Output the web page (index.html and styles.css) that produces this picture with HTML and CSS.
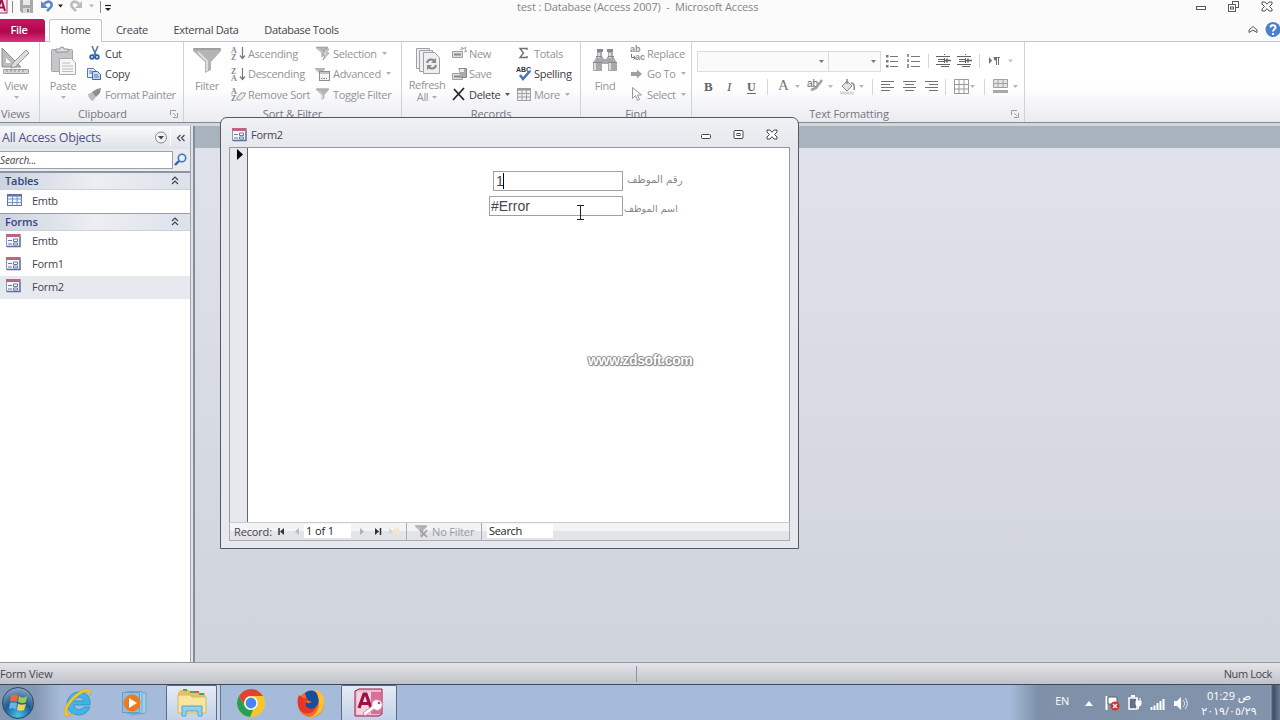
FILE: index.html
```html
<!DOCTYPE html>
<html lang="en">
<head>
  <meta charset="UTF-8">
  <title>test : Database (Access 2007) - Microsoft Access</title>
  <link rel="stylesheet" href="styles.css">
</head>
<body>
  <!-- Shared icons -->
  <svg class="sprite" width="0" height="0">
    <symbol id="i-form" viewBox="0 0 16 14">
      <rect x=".5" y=".5" width="13.500" height="12" fill="#f4f6fc" stroke="#8b97ba"/>
      <rect x="0" y="0" width="14.500" height="3" fill="#bd6480"/>
      <path d="M2 6.500h4M2 10h4" stroke="#6877a6"/>
      <path d="M7.500 5h4v2.500h-4zM7.500 9h4v2h-4z" fill="#fff" stroke="#6877a6"/>
      <path d="M14 3v9.500H1" fill="none" stroke="#5c6d9e" stroke-width="1.300"/>
    </symbol>
    <symbol id="i-funnel" viewBox="0 0 28 26">
      <path d="M0 1h28v3L18 15v8l-6 3V15L0 4z" fill="#b4b4b6"/>
      <path d="M1 2h26" stroke="#8b8b8d"/>
      <path d="M5 5l9 9v10" fill="none" stroke="#dcdcde" stroke-width="2"/>
    </symbol>
    <symbol id="i-down" viewBox="0 0 5 3"><path d="M0 0h5L2.500 3z" fill="currentColor"/></symbol>
    <symbol id="i-launch" viewBox="0 0 8 8"><path d="M.5 5V.5H6M3 3l3 3M7.500 3v4.500H3" fill="none" stroke="#9a9ca2"/></symbol>
    <symbol id="i-collapse" viewBox="0 0 8 9"><path d="M1 4l3-3 3 3M1 8l3-3 3 3" fill="none" stroke="#3b4458" stroke-width="1.200"/></symbol>
  </svg>

  <header class="titlebar">
    <div class="quick">
      <svg width="112" height="14" viewBox="0 0 112 14">
        <rect x="-6" y="-4" width="13" height="17" fill="#f9e6ee" stroke="#b51e5a"/>
        <path d="M-3 11L1 1h1l3 10M-1 7.500h5" fill="none" stroke="#a01048" stroke-width="2"/>
        <path d="M12.500 1v12M100.500 1v12" stroke="#8d8d90"/>
        <path d="M20 0h13v13H22l-2-2z" fill="#a9a9ac"/><path d="M23 0h7v5h-7z" fill="#e8e8ea"/><path d="M23 8h7v5h-7z" fill="#d6d6d8"/><path d="M27 9h2v3h-2z" fill="#888"/>
        <path d="M44 4c5-5 9-1 7 3l-4 4" fill="none" stroke="#5b86c8" stroke-width="2.600"/><path d="M41 1v7h7z" fill="#5b86c8"/>
        <path d="M58 4.500h5l-2.500 3z" fill="#222"/>
        <path d="M79 4c-5-5-9-1-7 3l4 4" fill="none" stroke="#bbb" stroke-width="2.600"/><path d="M82 1v7h-7z" fill="#bbb"/>
        <path d="M89 4.500h5l-2.500 3z" fill="#b5b5b8"/>
        <path d="M105 5.500h6" stroke="#222" stroke-width="1.200"/><path d="M105 8h6l-3 3z" fill="#222"/>
      </svg>
    </div>
    <div class="app-title">test : Database (Access 2007)&nbsp; -&nbsp; Microsoft Access</div>
    <svg class="window-buttons" width="86" height="14" viewBox="0 0 86 14">
      <g fill="#fff" stroke="#55565c">
        <rect x="2.500" y="6.500" width="9" height="3"/>
        <rect x="38.500" y="1.500" width="6" height="6"/><rect x="34.500" y="4.500" width="7" height="7"/><rect x="36.500" y="7" width="3" height="2"/>
        <path d="M68 2h3l2 2.300L75 2h3v2L75.500 6.500 78 9v2h-3l-2-2.300L71 11h-3V9l2.500-2.500L68 4z"/>
      </g>
    </svg>
  </header>

  <nav class="tabs">
    <a class="tab file">File</a>
    <a class="tab home">Home</a>
    <a class="tab create">Create</a>
    <a class="tab external">External Data</a>
    <a class="tab tools">Database Tools</a>
    <svg class="help" width="34" height="20" viewBox="0 0 34 20">
      <path d="M3 13.500V11l4-3.500 4 3.500v2.500L7 11z" fill="#fff" stroke="#55565c"/>
      <circle cx="27" cy="10.500" r="7.500" fill="#4a80cf"/>
      <path d="M24.500 8.500c0-3 5-3 5 0 0 1.800-2.500 1.800-2.500 4M27 14v2" fill="none" stroke="#fff" stroke-width="2"/>
    </svg>
  </nav>

  <section class="ribbon">
    <div class="group views">
      <div class="tools">
        <div class="big">
          <svg width="30" height="28" viewBox="0 0 30 28"><path d="M2 1v19h19z" fill="#bcbcbe" stroke="#8e8e91"/><path d="M6 11v5h5z" fill="#fff"/><path d="M12 17L26 3l3 3-14 14-4 1z" fill="#dcdcde" stroke="#98989b"/><path d="M3.500 22.500h25v4h-25z" fill="#d5d5d7" stroke="#a3a3a6"/><path d="M7 22v3m4-3v3m4-3v3m4-3v3m4-3v3" stroke="#8e8e91"/></svg>
          <span>View</span><svg class="arrow"><use href="#i-down"/></svg>
        </div>
      </div>
      <div class="caption">Views</div>
    </div>

    <div class="group clipboard">
      <div class="tools">
        <div class="big">
          <svg width="28" height="30" viewBox="0 0 28 30"><rect x="2.500" y="3.500" width="21" height="22" rx="1" fill="#c6c6c9" stroke="#a5a5a8"/><path d="M7 6V3h4a2 2 0 014 0h4v3z" fill="#dededf" stroke="#919194"/><path d="M10.500 12.500h12l4 4v12h-16z" fill="#f6f6f7" stroke="#aaaaad"/><path d="M13 17h8M13 20h11M13 23h11M13 25.500h11" stroke="#bcbcbf"/></svg>
          <span>Paste</span><svg class="arrow"><use href="#i-down"/></svg>
        </div>
        <div class="col">
          <div class="cmd on"><svg viewBox="0 0 16 16"><path d="M5 1l4 9M11 1L7 10" stroke="#5577a8" stroke-width="1.600"/><circle cx="5" cy="12" r="1.800" fill="none" stroke="#2c5ba8" stroke-width="1.800"/><circle cx="10" cy="12" r="1.800" fill="none" stroke="#2c5ba8" stroke-width="1.800"/></svg>Cut</div>
          <div class="cmd on"><svg viewBox="0 0 16 16"><path d="M.5 2.500h6l2 2v7h-8z" fill="#e9f0fb" stroke="#5478b5"/><path d="M5.500 5.500h5l3 3v5h-8z" fill="#c9daf4" stroke="#3e63a5"/><path d="M7 9h4M7 11h5M2 5h3M2 7h3" stroke="#5478b5"/></svg>Copy</div>
          <div class="cmd tight"><svg viewBox="0 0 16 16"><path d="M1 8l5-2 3 5-3 4c-3-1-5-4-5-7z" fill="#bcbcbf"/><path d="M5 6l5-3 4-1-1 5-4 4z" fill="#8d8d90"/></svg>Format Painter</div>
        </div>
      </div>
      <div class="caption">Clipboard<svg class="launch"><use href="#i-launch"/></svg></div>
    </div>

    <div class="group sort">
      <div class="tools">
        <div class="big">
          <svg width="30" height="28"><use href="#i-funnel" x="1" y="1" width="28" height="26"/></svg>
          <span>Filter</span>
        </div>
        <div class="col first">
          <div class="cmd"><svg viewBox="0 0 16 16"><text x="1" y="8">A</text><text x="1" y="15">Z</text><path d="M12.500 2v11M10 10.500l2.500 3 2.500-3" fill="none" stroke="#77777a" stroke-width="1.200"/></svg>Ascending</div>
          <div class="cmd"><svg viewBox="0 0 16 16"><text x="1" y="8">Z</text><text x="1" y="15">A</text><path d="M12.500 2v11M10 10.500l2.500 3 2.500-3" fill="none" stroke="#77777a" stroke-width="1.200"/></svg>Descending</div>
          <div class="cmd"><svg viewBox="0 0 16 16"><text x="1" y="8">A</text><text x="1" y="15">Z</text><path d="M7 12l4-5h4.500l-1 3-4 4H7z" fill="#ececee" stroke="#99999c"/></svg>Remove Sort</div>
        </div>
        <div class="col">
          <div class="cmd"><svg viewBox="0 0 16 16"><use href="#i-funnel" x="1" y="1" width="12" height="12"/><path d="M11 4l-4 6h3l-2 5 6-7h-3l3-4z" fill="#d5d5d8" stroke="#8e8e91" stroke-width=".7"/></svg>Selection<svg class="arrow"><use href="#i-down"/></svg></div>
          <div class="cmd"><svg viewBox="0 0 16 16"><use href="#i-funnel" x="0" y="1" width="10" height="11"/><rect x="4.500" y="5.500" width="10" height="9" fill="#f4f4f5" stroke="#8e8e91"/><path d="M5 7h9" stroke="#8e8e91"/><path d="M6 12.500h6" stroke="#777" stroke-dasharray="1.500 1"/></svg>Advanced<svg class="arrow"><use href="#i-down"/></svg></div>
          <div class="cmd"><svg viewBox="0 0 16 16"><use href="#i-funnel" x="1" y="2" width="13" height="12"/></svg>Toggle Filter</div>
        </div>
      </div>
      <div class="caption">Sort &amp; Filter</div>
    </div>

    <div class="group records">
      <div class="tools">
        <div class="big">
          <svg width="28" height="30" viewBox="0 0 28 30"><g fill="#efeff0" stroke="#a0a0a3"><path d="M3.500 2.500h13v20h-13z"/><path d="M6.500 4.500h13v21h-13z"/><path d="M10.500 6.500h11l5 5v16h-16z"/></g><path d="M14 17c1-5 7-4 8-1m1 3c-1 5-7 4-8 1" fill="none" stroke="#88888b" stroke-width="2"/><path d="M23 12v5h-5zM14 24v-5h5z" fill="#88888b"/></svg>
          <span>Refresh</span><span class="second">All<svg class="arrow"><use href="#i-down"/></svg></span>
        </div>
        <div class="col first">
          <div class="cmd"><svg viewBox="0 0 16 16"><path d="M1.500 6.500h10v6h-10z" fill="#e0e0e2" stroke="#a0a0a3"/><path d="M3 9.500h7" stroke="#88888b" stroke-width="2"/><path d="M9 4l2 1V2l1 2 3-2-1 3 2 1-3 1" fill="none" stroke="#a8a8ab"/></svg>New</div>
          <div class="cmd"><svg viewBox="0 0 16 16"><path d="M1.500 7.500h10v6h-10z" fill="#e0e0e2" stroke="#a0a0a3"/><path d="M3 10.500h7" stroke="#88888b" stroke-width="2"/><path d="M7.500 2.500h8v9h-6" fill="#aaa" stroke="#8a8a8d"/><path d="M9 3h4v3H9z" fill="#eee"/></svg>Save</div>
          <div class="cmd on"><svg viewBox="0 0 16 16"><path d="M3 3l10 11M13 2L2 14" stroke="#252527" stroke-width="1.800"/></svg>Delete<svg class="arrow"><use href="#i-down"/></svg></div>
        </div>
        <div class="col">
          <div class="cmd"><svg viewBox="0 0 16 16"><path d="M11 5V3.500H4L7.500 8 4 12.500h7V11" fill="none" stroke="#707073" stroke-width="1.400"/></svg>Totals</div>
          <div class="cmd on"><svg viewBox="0 0 16 16"><text class="abc" x="0" y="6">ABC</text><path d="M4 9l3 4 7-8" fill="none" stroke="#4a70c4" stroke-width="2.500"/></svg>Spelling</div>
          <div class="cmd"><svg viewBox="0 0 16 16"><path d="M1.500 2.500h13v12h-13z" fill="#f0f0f1" stroke="#a0a0a3"/><path d="M1 3.500h14" stroke="#98989b" stroke-width="2"/><path d="M1 7.500h14M1 11h14M6 4v10M10.500 4v10" stroke="#a0a0a3"/></svg>More<svg class="arrow"><use href="#i-down"/></svg></div>
        </div>
      </div>
      <div class="caption">Records</div>
    </div>

    <div class="group find">
      <div class="tools">
        <div class="big">
          <svg width="28" height="28" viewBox="0 0 28 28"><path d="M6 4h5v5l2 3h2l2-3V4h5v5l4 7v8h-9v-7h-6v7H2v-8l4-7z" fill="#a9a9ac"/><path d="M6 2h6v3H6zM16 2h6v3h-6z" fill="#88888b"/><path d="M4 16v7M19 16v7M8 6v5M19 6v5" stroke="#dcdcde" stroke-width="2"/><path d="M2 15.500h9M17 15.500h9M5 9.500h6M17 9.500h6" stroke="#88888b"/></svg>
          <span>Find</span>
        </div>
        <div class="col">
          <div class="cmd"><svg viewBox="0 0 16 16"><text class="ab" x="1" y="7">ab</text><text class="ab" x="6" y="15">ac</text><path d="M2.500 9v3.500H6M4.500 11l2 1.500-2 2" fill="none" stroke="#777"/></svg>Replace</div>
          <div class="cmd"><svg viewBox="0 0 16 16"><path d="M2 6h6V3.500l5 4.500-5 4.500V10H2z" fill="#a0a0a3"/></svg>Go To<svg class="arrow"><use href="#i-down"/></svg></div>
          <div class="cmd"><svg viewBox="0 0 16 16"><path d="M3.500 1.500v11l3-3 2 5 2-1-2-4.500h4z" fill="#fff" stroke="#98989b"/></svg>Select<svg class="arrow"><use href="#i-down"/></svg></div>
        </div>
      </div>
      <div class="caption">Find</div>
    </div>

    <div class="group text">
      <div class="tools stack">
        <div class="format-row">
          <div class="combo"><svg class="arrow"><use href="#i-down"/></svg></div>
          <div class="combo small"><svg class="arrow"><use href="#i-down"/></svg></div>
          <svg class="lists" width="134" height="18" viewBox="0 0 134 18">
            <path d="M9 5.500h8M9 10.500h8M9 15.500h8M30 5.500h9M30 10.500h9M30 15.500h9" stroke="#77777a"/>
            <path d="M5 4h2.500v2.500H5zM5 9h2.500v2.500H5zM5 14h2.500v2.500H5z" fill="#77777a"/>
            <path d="M27 3v3M27 8v3M27 13v4" stroke="#77777a" stroke-width="1.500"/>
            <path d="M47.500 3v14M98.500 3v14" stroke="#d5d6d9"/>
            <g id="indent" stroke="#626265"><path d="M55 5.500h14M57 8.500h7M57 10.500h7M55 13.500h14M60 15.500h8"/><path d="M63.500 3v14" stroke-dasharray="1 1"/><path d="M64 9.500h6M66 7.500v4" stroke-width="1.500"/></g>
            <use href="#indent" x="21"/>
            <path d="M108 6v7l3-3.500z" fill="#707073"/><path d="M114 6.500h5M115.500 6v8M117.500 6v8" stroke="#707073"/><path d="M113 6h3v4c-3 0-4-3-3-4z" fill="#707073"/>
            <path d="M127 8.500h5l-2.500 3z" fill="#c0c0c3"/>
          </svg>
        </div>
        <svg class="format-row" width="328" height="24" viewBox="0 0 328 24">
          <g class="glyph"><text class="b" x="7" y="18">B</text><text class="i" x="30" y="18">I</text><text class="u" x="50" y="18">U</text><text class="a" x="81" y="17">A</text><text class="ab" x="110" y="14">ab</text></g>
          <path d="M50 20.500h9" stroke="#666"/>
          <path d="M114 17l5-2 6-8" fill="none" stroke="#a0a0a3" stroke-width="2.500"/>
          <path d="M145 13l5-5 5 5-5 5z" fill="#e2e2e4" stroke="#88888b"/><path d="M150 6v5M154 10c3 0 4 3 3 7" fill="none" stroke="#88888b" stroke-width="1.500"/><path d="M143 20h14" stroke="#dadadd" stroke-width="3"/>
          <g fill="#b7b7ba"><path d="M98 12h5l-2.500 3zM131 12h5l-2.500 3zM162 12h5l-2.500 3zM273 12h5l-2.500 3zM316 12h5l-2.500 3z"/></g>
          <path d="M70.500 6v16M175.500 6v16M248.500 6v16M287.500 6v16" stroke="#d5d6d9"/>
          <path d="M184 8.500h13M184 11.500h9M184 14.500h13M184 17.500h9M206 8.500h13M208 11.500h9M206 14.500h13M208 17.500h9M228 8.500h13M232 11.500h9M228 14.500h13M232 17.500h9" stroke="#727275" stroke-width="1.200"/>
          <path d="M257.500 6.500h14v14h-14zM262 6v14M267 6v14M257 11.500h15M257 16h15" fill="none" stroke="#98989b"/>
          <path d="M296.500 6.500h14v8h-14zM301 6v8M306 6v8M296 10.500h15" fill="#e5e5e7" stroke="#a0a0a3"/><path d="M296 18.500h15" stroke="#a8a8ab" stroke-width="3"/>
        </svg>
      </div>
      <div class="caption">Text Formatting<svg class="launch"><use href="#i-launch"/></svg></div>
    </div>
  </section>

  <main class="main">
    <aside class="objects">
      <div class="objects-head">
        <span>All Access Objects</span>
        <svg width="34" height="16" viewBox="0 0 34 16"><circle cx="8" cy="7.500" r="5.500" fill="#f2f3f5" stroke="#85888f"/><path d="M5 6h6l-3 3.500z" fill="#444"/><path d="M17.500 0v16" stroke="#fff"/><path d="M27.500 5l-3 3 3 3M31.500 5l-3 3 3 3" fill="none" stroke="#3b4458" stroke-width="1.200"/></svg>
      </div>
      <div class="search">
        <div class="search-box">Search...</div>
        <svg width="16" height="16" viewBox="0 0 16 16"><circle cx="9" cy="6" r="3.700" fill="#e6f1fb" stroke="#3d78bf" stroke-width="1.600"/><path d="M6 9l-4 4" stroke="#345f9d" stroke-width="2.400"/></svg>
      </div>
      <div class="section">Tables<svg width="8" height="9"><use href="#i-collapse"/></svg></div>
      <div class="item table"><svg viewBox="0 0 16 14"><rect x="1.500" y="1.500" width="14" height="11" fill="#eef3fc" stroke="#5f7bab"/><path d="M1 2.500h15" stroke="#5471a8" stroke-width="2"/><path d="M2 6h14M2 9.500h14M6.500 2v10M11 2v10" stroke="#7b94be"/></svg>Emtb</div>
      <div class="section forms">Forms<svg width="8" height="9"><use href="#i-collapse"/></svg></div>
      <div class="item"><svg><use href="#i-form"/></svg>Emtb</div>
      <div class="item"><svg><use href="#i-form"/></svg>Form1</div>
      <div class="item selected"><svg><use href="#i-form"/></svg>Form2</div>
    </aside>
    <div class="workspace"></div>
  </main>

  <footer class="status">
    <span class="mode">Form View</span>
    <span>Num Lock</span>
  </footer>

  <div class="taskbar">
    <div class="start">
      <svg width="34" height="34" viewBox="0 0 34 34">
        <defs><radialGradient id="orb" cx=".5" cy=".9" r=".9"><stop offset="0" stop-color="#45c5ec"/><stop offset=".5" stop-color="#1d5c94"/><stop offset="1" stop-color="#8fa9c4"/></radialGradient></defs>
        <circle cx="17" cy="17" r="15.500" fill="url(#orb)" stroke="#2d4868"/>
        <path d="M10 10c3-2 5-1 7 0l-1 6c-3-1-5-1-7 0z" fill="#ee6a32"/><path d="M18 10c3 2 5 2 8 0l-1 6c-3 2-5 1-8 0z" fill="#9cca4c"/><path d="M9 17c2-1 4-1 7 0l-1 6c-3-1-4-1-7 0z" fill="#64b4ea"/><path d="M17 18c3 1 5 1 8 0l-2 6c-2 1-4 1-7 0z" fill="#fbd14a"/>
      </svg>
    </div>
    <div class="task ie">
      <svg width="32" height="32" viewBox="0 0 32 32"><path fill-rule="evenodd" d="M17 5c7 0 12 5 11 13H12c0 5 7 6 10 2h6c-2 5-6 8-11 8C10 28 5 23 5 17S10 5 17 5zm-5 9h10c-1-5-9-5-10 0z" fill="#3eb5e9" stroke="#2588bd" stroke-width=".7"/><path d="M4 29C-4 23 15 1 26 2c4 1 3 5 2 7 0-4-2-5-5-4C15 7 1 23 6 27c2 1 4 0 6-1-2 2-6 4-8 3z" fill="#f4c92f" stroke="#c69a24" stroke-width=".5"/></svg>
    </div>
    <div class="task wmp">
      <svg width="28" height="28" viewBox="0 0 28 28"><path d="M10 2l15 2v20l-15 2z" fill="#a5cfe7" stroke="#6ba7cc"/><path d="M6 2.500h15v22H6z" fill="#a5cfe7" stroke="#6ba7cc"/><path d="M1.500 3.500h17v20h-17z" fill="#8fc0e2" stroke="#639cc5"/><circle cx="11" cy="14" r="8.500" fill="#ee7a1d"/><path d="M8 9l8 5-8 5z" fill="#fff"/></svg>
    </div>
    <div class="task explorer active">
      <svg width="34" height="30" viewBox="0 0 34 30"><path d="M3 5l2-3h9l2 3h14v18H3z" fill="#e5c166"/><path d="M8 2h4M15 4h6M24 6h5" stroke="#4fa25b" stroke-width="2"/><path d="M20 4h4" stroke="#d55b42" stroke-width="2"/><path d="M3 7h12l2 2h14v16H3z" fill="#f8e6a0" stroke="#d8b85f"/><path d="M7 28V18h20v10h-4v-5H11v5z" fill="#8fd0ed" stroke="#50a6cf"/></svg>
    </div>
    <div class="stack-edge"></div>
    <div class="task chrome">
      <svg width="30" height="30" viewBox="0 0 30 30"><circle cx="15" cy="15" r="14" fill="#f7c628"/><path d="M2.900 8A14 14 0 0127.100 8H15a7 7 0 00-6.100 10.500z" fill="#db4437"/><path d="M2.900 8l6 10.500A7 7 0 0017 21.700L14 29A14 14 0 012.900 8z" fill="#22a05a"/><circle cx="15" cy="15" r="6.800" fill="#fff"/><circle cx="15" cy="15" r="5.400" fill="#4386f4"/></svg>
    </div>
    <div class="task firefox">
      <svg width="30" height="30" viewBox="0 0 30 30"><circle cx="15" cy="16" r="13" fill="#f36c24"/><path d="M19 1c6 2 10 8 9 15-1 8-7 13-14 13 9-3 12-14 5-28z" fill="#ffc22f"/><path d="M9 5c6-5 12-2 13 4 2 5-1 12-7 12-4 0-7-3-5-7 2 2 4 1 6 0l-5-2z" fill="#174e9d"/><path d="M3 7l4 3 5 1-3 4c0 6 8 7 11 4-2 8-14 9-17 1C1 16 1 11 3 7z" fill="#e7352a"/></svg>
    </div>
    <div class="task access active">
      <svg width="30" height="30" viewBox="0 0 30 30"><path d="M1 3l4-2h23v25l-3 2H1z" fill="#f0b9ce" stroke="#a8134c"/><path d="M3 4h24v22H3z" fill="#d8719a"/><path d="M3 4h14v22H3z" fill="#f5d4e0"/><path d="M5 20l5-14h2l5 14M7 15.500h8" fill="none" stroke="#a00f46" stroke-width="3.200"/><path d="M11 28l-2-3 9-7c-1-5 3-7 6-6 5 0 6 8 1 10-2 1-4 0-5-1z" fill="#fff" stroke="#d589a8"/><circle cx="25" cy="15" r="1.300" fill="#c83c74"/></svg>
    </div>
    <div class="tray">
      <span class="lang">EN</span>
      <svg width="104" height="20" viewBox="0 0 104 20">
        <path d="M1 13h8L5 8z" fill="#fff"/>
        <path d="M22.500 3v14" stroke="#fff" stroke-width="2"/><path d="M24 4h9v7h-9z" fill="#fff" stroke="#526275"/><circle cx="31" cy="13" r="4.500" fill="#d3302b"/><path d="M29 11l4 4m0-4l-4 4" stroke="#fff" stroke-width="1.300"/>
        <path d="M45 5h8v11h-8z" fill="#607289" stroke="#fff" stroke-width="1.500"/><path d="M47 3h4" stroke="#fff" stroke-width="2"/><path d="M52 8h5v3c0 3-5 3-5 0zM53 5v3M56 5v3M54.500 12v4" fill="#fff" stroke="#fff"/>
        <path d="M67.500 14v3M70.500 12.500v4.500M73.500 10v7M76.500 8v9M79.500 6v11" stroke="#fff" stroke-width="2"/>
        <path d="M90 8h3l4-4v13l-4-4h-3z" fill="#fff"/><path d="M99 7c2 2 2 5 0 7M101 5c3 3 3 8 0 11" fill="none" stroke="#e8edf4"/>
      </svg>
      <div class="clock" dir="ltr"><div>01:29 ص</div><div>٢٠١٩/٠٥/٢٩</div></div>
      <div class="show-desktop"></div>
    </div>
  </div>

  <!-- Floating form window -->
  <div class="form-window">
    <div class="form-title">
      <svg width="16" height="14"><use href="#i-form"/></svg>
      <span>Form2</span>
      <svg class="form-buttons" width="82" height="14" viewBox="0 0 82 14"><g fill="#fff" stroke="#44464d"><rect x="2.500" y="6.500" width="9" height="4" rx="1"/><rect x="35" y="2.500" width="9" height="8" rx="1"/><rect x="38" y="5.500" width="3" height="2"/><path d="M68 2h3l2 2.300L75 2h3v2L75.500 6.500 78 9v2h-3l-2-2.300L71 11h-3V9l2.500-2.500L68 4z"/></g></svg>
    </div>
    <div class="form-body">
      <div class="selector"><svg width="6" height="11"><path d="M0 0v11l6-5.500z"/></svg></div>
      <div class="sheet">
        <div class="field number"><div class="box">1<span class="caret"></span></div><label lang="ar" dir="rtl">رقم الموظف</label></div>
        <div class="field name"><div class="box">#Error</div><label lang="ar" dir="rtl">اسم الموظف</label></div>
      </div>
    </div>
    <div class="recordbar">
      <span class="record-label">Record:</span>
      <svg width="22" height="11" viewBox="0 0 22 11"><path d="M1 2v7" stroke="#333" stroke-width="1.500"/><path d="M6 2v7L2 5.500z" fill="#333"/><path d="M21 2v7l-4-3.500z" fill="#b9bbc0"/></svg>
      <span class="record-pos">1 of 1</span>
      <svg class="next" width="43" height="11" viewBox="0 0 43 11"><path d="M1 2v7l4-3.500z" fill="#b0b2b8"/><path d="M16 2v7l4-3.500z" fill="#333"/><path d="M21.500 2v7" stroke="#333" stroke-width="1.500"/><path d="M30 2v7l4-3.500z" fill="#d5d6da"/><path d="M36 2v7M39 2v7M34 5h7" stroke="#f1e6c6" stroke-width="2"/></svg>
      <span class="no-filter"><svg width="14" height="14" viewBox="0 0 14 14"><use href="#i-funnel" x="0" y="1" width="12" height="11"/><path d="M5 6l7 7M12 6l-6 7" stroke="#999" stroke-width="1.500"/></svg>No Filter</span>
      <span class="record-search">Search</span>
    </div>
    <div class="watermark">www.zdsoft.com</div>
    <svg class="ibeam" width="9" height="15" viewBox="0 0 9 15"><path d="M1 .5h7M4.500 1v13M1 14.500h7" stroke="#222"/></svg>
  </div>
</body>
</html>
```
FILE: styles.css
```css
/* Base */
* {
  box-sizing: border-box;
}

body {
  margin: 0;
  width: 1280px;
  height: 720px;
  overflow: hidden;
  position: relative;
  display: flex;
  flex-direction: column;
  font-family: "Open Sans", "Noto Sans", sans-serif;
  font-size: 11px;
  letter-spacing: -0.3px;
  color: #48434f;
  background: #fbfbfb;
  white-space: nowrap;
}

svg {
  flex: none;
  display: block;
}

.sprite {
  position: absolute;
}

.arrow {
  width: 5px;
  height: 3px;
  color: #b0b0b3;
}

/* Title bar */
.titlebar {
  height: 19px;
  display: flex;
  align-items: flex-start;
}

.app-title {
  margin-left: 405px;
  line-height: 14px;
  letter-spacing: -0.14px;
  color: #858488;
}

.window-buttons {
  margin-left: auto;
}

/* Tabs */
.tabs {
  height: 23px;
  flex: none;
  display: flex;
  border-bottom: 1px solid #c3c5c9;
}

.tab {
  line-height: 22px;
  height: 23px;
  text-align: center;
}

.file {
  width: 45px;
  padding-right: 7px;
  color: #fff;
  font-weight: 600;
  background: linear-gradient(#c5175f, #b2064f 55%, #d5377c);
  border-radius: 0 3px 0 0;
}

.home {
  width: 53px;
  margin-left: 4px;
  background: #fff;
  border: 1px solid #c3c5c9;
  border-bottom: 0;
  border-radius: 3px 3px 0 0;
  line-height: 20px;
}

.create { width: 60px; }
.external { width: 88px; }
.tab.tools { width: 103px; }

.help {
  margin-left: auto;
}

/* Ribbon */
.ribbon {
  height: 81px;
  flex: none;
  display: flex;
  background: linear-gradient(#fff 55%, #e9ebef);
  border-bottom: 1px solid #84888f;
  color: #949397;
}

.group {
  display: flex;
  flex-direction: column;
  border-right: 1px solid #d0d2d6;
}

.views { width: 40px; }
.clipboard { width: 144px; }
.sort { width: 218px; }
.records { width: 179px; }
.find { width: 111px; }
.text { width: 333px; }

.group .tools {
  height: 64px;
  padding-top: 1px;
  display: flex;
}

.big {
  width: 46px;
  display: flex;
  flex-direction: column;
  align-items: center;
  padding-top: 3px;
}

.big > svg:first-child {
  height: 30px;
}

.big > span {
  line-height: 14px;
  margin-top: 3px;
}

.big > .arrow {
  margin-top: 3px;
}

.big > .second {
  display: flex;
  align-items: center;
  gap: 4px;
  line-height: 12px;
  margin-top: 0;
}

.records .big > span {
  line-height: 12px;
  letter-spacing: -0.4px;
}

.views .big { width: 32px; }
.views .big svg:first-child { align-self: flex-start; }
.clipboard .col { margin-left: 1px; }
.sort .first { width: 85px; }
.records .big { width: 48px; margin-left: 1px; }
.records .first { width: 65px; }
.find .big { width: 48px; }

.cmd {
  height: 20.6px;
  display: flex;
  align-items: center;
}

.cmd.tight {
  letter-spacing: -0.43px;
}

.cmd > svg:first-child {
  width: 16px;
  height: 16px;
  margin-right: 2px;
}

.cmd .arrow {
  margin-left: 5px;
}

.cmd.on {
  color: #3f3c46;
}

.cmd.on .arrow {
  color: #55555a;
}

.cmd text {
  font: bold 8px "Liberation Serif", serif;
  fill: #88888b;
  letter-spacing: 0;
}

.cmd .abc {
  font: bold 7px "Liberation Sans", sans-serif;
  fill: #333;
}

.cmd .ab {
  font: bold 9px "Liberation Sans", sans-serif;
  fill: #909093;
}

.caption {
  position: relative;
  line-height: 17px;
  text-align: center;
  color: #77747f;
  letter-spacing: -0.1px;
}

.clipboard .caption { padding-right: 18px; }
.text .caption { padding-right: 18px; }
.views .caption { padding-right: 8px; }

.launch {
  position: absolute;
  right: 5px;
  top: 5px;
  width: 8px;
  height: 8px;
}

.group .tools.stack {
  flex-direction: column;
  padding: 9px 0 0 5px;
}

.format-row {
  display: flex;
}

.combo {
  width: 132px;
  height: 21px;
  border: 1px solid #dcdde0;
  background: #fafafa;
  display: flex;
  align-items: center;
  justify-content: flex-end;
  padding-right: 4px;
}

.combo.small {
  width: 52px;
  border-left: 0;
}

.combo .arrow {
  color: #77777b;
}

.stack > svg.format-row {
  margin-top: 1px;
}

.glyph {
  fill: #626265;
  font-family: "Liberation Serif", serif;
  font-size: 13px;
  letter-spacing: 0;
}

.glyph .b { font-weight: bold; }
.glyph .i { font-style: italic; }
.glyph .u { font-weight: bold; font-size: 12px; }
.glyph .a { font-size: 15px; fill: #77777a; }
.glyph .ab { font: 10px "Liberation Sans", sans-serif; }

/* Main area */
.main {
  flex: 1;
  min-height: 0;
  display: flex;
  border-top: 3px solid #d3d8e0;
}

.objects {
  width: 195px;
  background: #fff;
  border-right: 2px solid #858c98;
  box-shadow: inset -1px 0 #dfe3ea, inset -2px 0 #dfe3ea, inset -3px 0 #9fa6b2;
  padding-right: 3px;
}

.objects-head {
  height: 23px;
  display: flex;
  align-items: center;
  justify-content: space-between;
  padding: 0 3px 0 2px;
  font-size: 12.5px;
  letter-spacing: -0.25px;
  color: #4f5387;
  background: linear-gradient(#f8f9fa, #dfe2e8);
}

.search {
  height: 24px;
  display: flex;
  align-items: center;
  background: #e9ebf0;
  border-bottom: 2px solid #8f949f;
}

.search-box {
  width: 173px;
  height: 18px;
  line-height: 16px;
  font-size: 10px;
  font-style: italic;
  letter-spacing: -0.15px;
  background: #fff;
  border: 1px solid #9ba0aa;
  border-left: 0;
}

.section {
  height: 17px;
  display: flex;
  align-items: center;
  justify-content: space-between;
  padding: 0 11px 2px 5px;
  font-weight: 600;
  letter-spacing: -0.1px;
  color: #33477f;
  background: linear-gradient(90deg, #cdd3e0, #eceef3 50%, #dde1ea);
  border-bottom: 1px solid #ccd1da;
}

.section.forms {
  height: 18px;
  border-top: 1px solid #989ea9;
}

.item {
  height: 22.7px;
  display: flex;
  align-items: center;
  padding-bottom: 3px;
}

.item.table {
  height: 23px;
}

.item svg {
  width: 16px;
  height: 14px;
  margin: 0 10px 0 6px;
}

.item.selected {
  background: #e6e9ee;
}

.workspace {
  flex: 1;
  border-top: 22px solid #a9b3be;
  background: linear-gradient(#dfe2ea, #cfd3db);
}

/* Status bar */
.status {
  height: 22px;
  flex: none;
  display: flex;
  align-items: center;
  border-top: 1px solid #9398a1;
  background: linear-gradient(#e3e5e9, #bfc2c8);
  letter-spacing: -0.15px;
  padding-right: 8px;
}

.mode {
  width: 637px;
  line-height: 16px;
  border-right: 1px solid #8f939b;
  margin-right: auto;
}

.status span:last-child {
  letter-spacing: -0.4px;
}

/* Windows taskbar */
.taskbar {
  height: 36px;
  flex: none;
  display: flex;
  align-items: center;
  border-top: 1px solid #3e4a5c;
  background: linear-gradient(90deg, #8396b2, #8497b3 35px, #a6bbda 60px, #a5bbdb 1010px, #7f91a9 1037px, #8294ab);
}

.start {
  width: 52px;
  padding-left: 1px;
}

.task {
  height: 35px;
  display: flex;
  align-items: center;
  justify-content: center;
}

.ie { width: 52px; }
.wmp { width: 62px; }
.explorer { width: 51px; }
.chrome { width: 60px; }
.firefox { width: 60px; }
.access { width: 56px; }

.active {
  background: linear-gradient(#e5ebf5, #c3d1e7);
  border: 1px solid #5b6b83;
  border-bottom: 0;
  border-radius: 2px 2px 0 0;
}

.stack-edge {
  width: 4px;
  height: 35px;
  background: #c9d6ea;
  border-right: 1px solid #63738b;
}

.tray {
  margin-left: auto;
  display: flex;
  align-items: center;
  align-self: stretch;
  color: #fff;
}

.lang {
  margin: -4px 15px 0 0;
}

.clock {
  width: 82px;
  text-align: center;
  line-height: 15px;
  font-family: "Open Sans", "DejaVu Sans", sans-serif;
  letter-spacing: -0.4px;
}

.show-desktop {
  width: 10px;
  align-self: stretch;
  background: linear-gradient(90deg, #9fafc4, #3d4d63 30%, #6b7b92);
}

/* Form window */
.form-window {
  position: absolute;
  left: 220px;
  top: 117px;
  width: 579px;
  height: 432px;
  padding: 0 8px;
  border: 1px solid #555963;
  border-radius: 7px 7px 0 0;
  background: linear-gradient(#f0f1f3, #e6e8ed 28px);
}

.form-title {
  height: 29px;
  display: flex;
  align-items: center;
  padding-left: 3px;
  padding-top: 4px;
}

.form-title span {
  margin-left: 3px;
}

.form-buttons {
  margin-left: auto;
  margin-right: 9px;
}

.form-body {
  height: 375px;
  display: flex;
  border: 1px solid #93979f;
  border-bottom: 0;
}

.selector {
  width: 18px;
  padding: 1px 0 0 7px;
  border-right: 1px solid #62666e;
  background: #e6e8ed;
}

.sheet {
  flex: 1;
  background: #fff;
  padding-top: 23px;
}

.field {
  display: flex;
}

.box {
  height: 20px;
  display: flex;
  align-items: center;
  border: 1px solid #a0a0a2;
  font: 14px "Liberation Sans", Arial, sans-serif;
  letter-spacing: 0;
}

.field label {
  font: 10.2px "DejaVu Sans", sans-serif;
  line-height: 17px;
  letter-spacing: 0;
  color: #85878d;
}

.number { padding-left: 245px; }
.number .box { width: 130px; padding: 0 0 1px 2px; }
.number label { margin-left: 4px; }
.name { padding-left: 241px; margin-top: 5px; }
.name .box { width: 134px; padding-left: 1px; }
.name label { margin: 4px 0 0 1px; font-size: 9.6px; }

.caret {
  width: 1px;
  height: 16px;
  margin-left: -1px;
  background: #000;
}

/* Record navigation */
.recordbar {
  height: 19px;
  display: flex;
  align-items: center;
  border: 1px solid #a9acb3;
  border-top-color: #c9cbd0;
  background: linear-gradient(#f3f4f6 50%, #e2e4e8 50%);
  padding: 0 0 1px 4px;
}

.record-label {
  width: 44px;
  letter-spacing: -0.15px;
}

.record-pos,
.record-search {
  background: #fff;
  height: 14px;
  line-height: 14px;
  padding-left: 2px;
  color: #222;
}

.record-pos {
  width: 47px;
  margin-left: 4px;
  letter-spacing: -0.1px;
}

.next {
  margin-left: 8px;
}

.no-filter {
  display: flex;
  align-items: center;
  gap: 3px;
  width: 76px;
  height: 17px;
  margin-left: 4px;
  padding-left: 8px;
  border: solid #a9acb3;
  border-width: 0 1px;
  color: #999ba0;
  letter-spacing: -0.15px;
}

.record-search {
  width: 66px;
  margin-left: 5px;
}

.watermark {
  position: absolute;
  left: 367px;
  top: 234px;
  font: bold 14px/16px "Liberation Sans", Arial, sans-serif;
  letter-spacing: -0.4px;
  color: #fff;
  text-shadow: 1px 0 1px #888, -1px 0 1px #888, 0 1px 1px #888, 0 -1px 1px #888, 1px 1px 1px #999;
}

.ibeam {
  position: absolute;
  left: 355px;
  top: 87px;
}
```
